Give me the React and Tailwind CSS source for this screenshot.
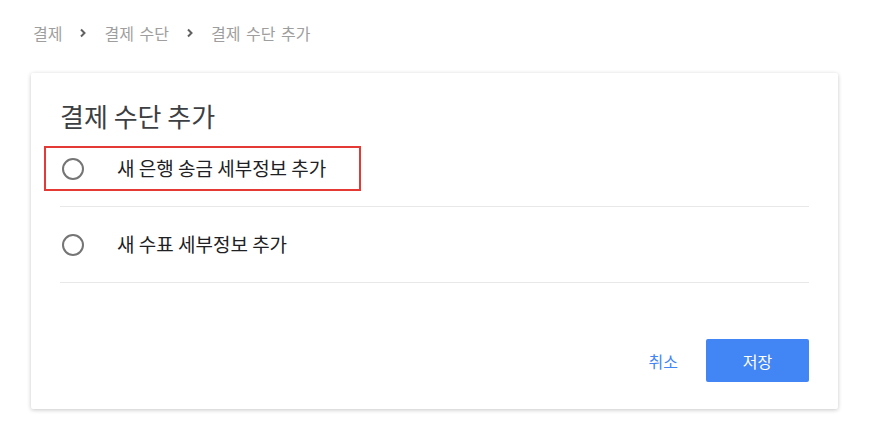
import React from 'react';

const Chevron = () => (
  <svg width="8" height="10" viewBox="0 0 8 10" className="mx-[17px]">
    <path d="M2 1.5 L5.5 5 L2 8.5" fill="none" stroke="#616161" strokeWidth="2" />
  </svg>
);

const Radio = () => (
  <span className="w-[22px] h-[22px] rounded-full border-2 border-[#757575] shrink-0" />
);

const options = ['새 은행 송금 세부정보 추가', '새 수표 세부정보 추가'];

export default function App() {
  return (
    <div
      className="w-[879px] h-[447px] bg-white"
      style={{ fontFamily: '"Noto Sans CJK KR", "Noto Sans", sans-serif' }}
    >
      {/* Breadcrumb */}
      <div className="flex items-center pl-[33px] pt-[22px] h-[43px] text-[16px] text-[#9e9e9e] [word-spacing:2px]">
        <span>결제</span>
        <Chevron />
        <span>결제 수단</span>
        <Chevron />
        <span>결제 수단 추가</span>
      </div>

      {/* Card */}
      <div className="ml-[31px] mt-[30px] w-[807px] rounded-[2px] bg-white shadow-[0_1px_4px_rgba(0,0,0,0.22)] px-[29px] pt-[28px] pb-[27px]">
        <h2 className="text-[26px] leading-[30px] text-[#3c4043]">결제 수단 추가</h2>

        <div>
          {options.map((label, i) => (
            <div
              key={label}
              className="relative h-[76px] flex items-center border-b border-[#e8e8e8] pl-[2px]"
            >
              {i === 0 && (
                <div className="absolute left-[-16px] top-[15px] w-[317px] h-[45px] border-2 border-[#e53935]" />
              )}
              <Radio />
              <span className="ml-[33px] text-[19px] text-[#202124]">{label}</span>
            </div>
          ))}
        </div>

        {/* Actions */}
        <div className="flex items-center justify-end mt-[56px]">
          <button className="text-[16px] text-[#4285f4] mr-[28px]">취소</button>
          <button className="w-[103px] h-[43px] rounded-[2px] bg-[#4285f4] text-white text-[16px]">
            저장
          </button>
        </div>
      </div>
    </div>
  );
}
